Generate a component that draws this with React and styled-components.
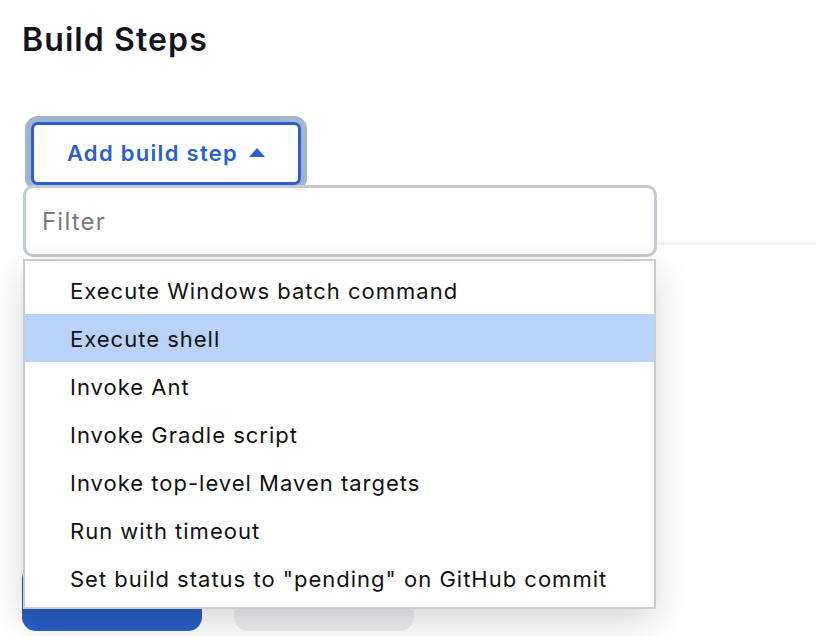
import React from 'react';
import styled, { createGlobalStyle } from 'styled-components';

const GlobalStyle = createGlobalStyle`
  html, body {
    margin: 0;
    padding: 0;
    background: #fff;
    font-family: Inter, "Noto Sans", "Liberation Sans", sans-serif;
  }
`;

const Page = styled.div`
  padding: 21px 0 0 22px;
  height: 636px;
  box-sizing: border-box;
  overflow: hidden;
`;

const Heading = styled.h2`
  margin: 0;
  font-size: 32px;
  line-height: 38px;
  font-weight: 600;
  color: #14141f;
  letter-spacing: 1.1px;
`;

const MenuAnchor = styled.div`
  position: relative;
  margin-top: 63px;
  margin-left: 9px;
  width: 270px;
  z-index: 2;
`;

const AddButton = styled.button`
  width: 270px;
  height: 63px;
  box-sizing: border-box;
  border: 3px solid #2c5fc9;
  border-radius: 7px;
  background: #fff;
  box-shadow: 0 0 0 6px #9fb6d0;
  color: #2c5fc9;
  font-family: inherit;
  font-size: 22px;
  font-weight: 600;
  letter-spacing: 1.3px;
  display: flex;
  align-items: center;
  justify-content: center;
  gap: 11px;
  padding: 0 0 2px;
  cursor: pointer;
`;

const Popover = styled.div`
  position: absolute;
  top: 100%;
  left: -8px;
  width: 634px;
  display: flex;
  flex-direction: column;
  gap: 2px;
`;

const FilterInput = styled.input`
  height: 72px;
  box-sizing: border-box;
  border: 3px solid #c3cbd0;
  border-radius: 10px;
  background: #fff;
  padding: 0 16px;
  font-family: inherit;
  font-size: 24px;
  letter-spacing: 1.2px;
  color: #222;
  outline: none;
  &::placeholder {
    color: #7b7b7b;
  }
`;

const List = styled.ul`
  margin: 0;
  padding: 5px 0;
  list-style: none;
  width: 633px;
  box-sizing: border-box;
  background: #fff;
  border: 2px solid #c8cdd1;
  box-shadow: 0 12px 34px rgba(0, 0, 0, 0.16);
`;

const Item = styled.li`
  height: 48px;
  display: flex;
  align-items: center;
  padding-left: 45px;
  padding-top: 1px;
  box-sizing: border-box;
  font-size: 22px;
  letter-spacing: 1px;
  color: #111;
  background: ${p => (p.$active ? '#b9d3f8' : 'transparent')};
  cursor: pointer;
`;

const Section = styled.div`
  margin-top: 57px;
  border-top: 3px solid #f2f2f6;
  padding-top: 320px;
`;

const Actions = styled.div`
  display: flex;
  gap: 32px;
`;

const ActionButton = styled.button`
  width: 180px;
  height: 66px;
  border: none;
  border-radius: 14px;
  background: ${p => (p.$primary ? 'linear-gradient(#2452a8, #2a60c9)' : '#efeff2')};
`;

const steps = [
  'Execute Windows batch command',
  'Execute shell',
  'Invoke Ant',
  'Invoke Gradle script',
  'Invoke top-level Maven targets',
  'Run with timeout',
  'Set build status to "pending" on GitHub commit',
];

export default function App() {
  return (
    <>
      <GlobalStyle />
      <Page>
        <Heading>Build Steps</Heading>
        <MenuAnchor>
          <AddButton>
            Add build step
            <svg width="16" height="9" viewBox="0 0 16 9">
              <path d="M8 0 L16 9 L0 9 Z" fill="#2c5fc9" />
            </svg>
          </AddButton>
          <Popover>
            <FilterInput placeholder="Filter" />
            <List>
              {steps.map((s, i) => (
                <Item key={i} $active={i === 1}>{s}</Item>
              ))}
            </List>
          </Popover>
        </MenuAnchor>
        <Section>
          <Actions>
            <ActionButton $primary aria-label="Save" />
            <ActionButton aria-label="Apply" />
          </Actions>
        </Section>
      </Page>
    </>
  );
}
